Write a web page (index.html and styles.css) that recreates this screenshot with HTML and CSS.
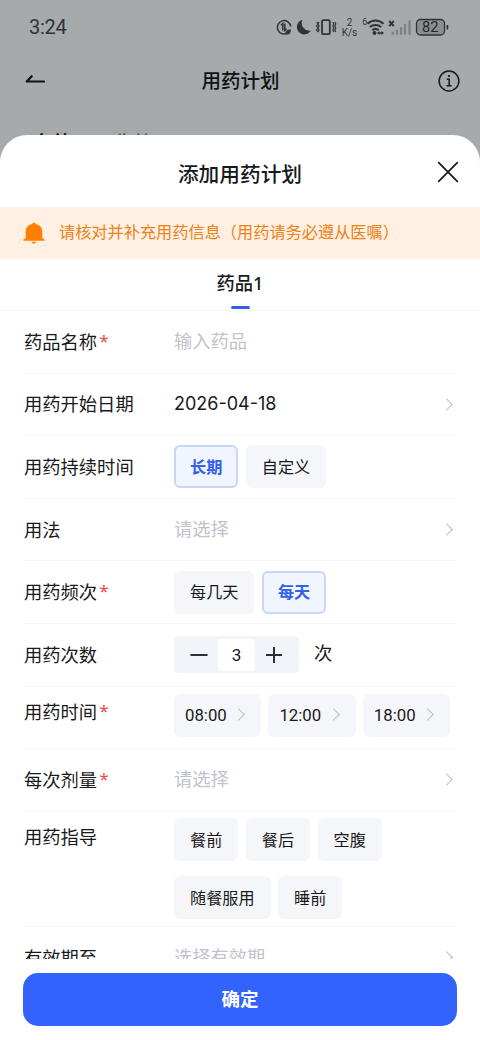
FILE: index.html
```html
<!DOCTYPE html>
<html lang="zh-CN">
<head>
<meta charset="utf-8">
<title>用药计划</title>
<link rel="stylesheet" href="styles.css">
</head>
<body>
<div class="screen">
  <div class="backdrop">
    <div class="status">
      <span class="clock">3:24</span>
      <svg class="status-icons" width="176" height="26" viewBox="0 0 176 26" fill="none" stroke="#303335">
        <path d="M12.300 19.200A6.700 6.700 0 1 1 15.700 12.500M6 11.200l1.800-1.700v7M9.800 9.500v7l1.800-1.700" stroke-width="1.500"/>
        <path d="M10.800 20.200c-1-3 1-4.700 5-5 .2 4-1.500 6-5 5z" fill="#303335" stroke="none"/>
        <path d="M27.500 5.800A7.400 7.400 0 1 0 35.800 16.500 7.600 7.600 0 0 1 27.500 5.800z" fill="#303335" stroke="none"/>
        <rect x="47" y="6.200" width="7.800" height="14" rx="1.300" stroke-width="1.800"/>
        <path d="M41.500 8l1.600 2-1.600 2 1.600 2-1.600 2 1.600 2M44 8l-1 2 1 2-1 2 1 2-1 2M57.800 8l1 2-1 2 1 2-1 2 1 2M59.800 8l1 2-1 2 1 2-1 2 1 2" stroke-width="1.200"/>
        <g fill="#303335" stroke="none">
          <text x="74.500" y="11.500" font-size="10" text-anchor="middle">2</text>
          <text x="74.500" y="22.300" font-size="10" text-anchor="middle">K/s</text>
          <text x="87.200" y="11" font-size="9">6</text>
        </g>
        <path d="M92.500 9.800c4.500-4.300 11.500-4.300 16 0M94.800 13.100c3.200-2.900 8.200-2.900 11.400 0M97.300 16.200c1.900-1.600 4.500-1.600 6.400 0" stroke-width="2"/>
        <circle cx="99.500" cy="19" r="2" fill="#303335" stroke="none"/>
        <path d="M102 19l2.500-2v1.300h2V17l2.500 2-2.500 2v-1.300h-2V21z" fill="#303335" stroke="none"/>
        <path d="M114.200 7l4.600 5.200M118.800 7l-4.600 5.200" stroke-width="1.900"/>
        <path d="M117.800 20.800V17.500M122 20.800V15.500M126 20.800V13M130 20.800V10M134.500 20.800V6.200" stroke="#7d8183" stroke-width="2.200"/>
        <rect x="141.500" y="5.500" width="28" height="15.500" rx="4" fill="#8a8e90" stroke-width="1.300"/>
        <path d="M172.400 11v4.500" stroke-width="1.700"/>
        <text class="battery-text" x="155.300" y="18.400" font-size="14.600" text-anchor="middle" fill="#242729" stroke="none">82</text>
      </svg>
    </div>
    <div class="navbar">
      <svg width="22" height="20" viewBox="0 0 22 20" fill="none" stroke="#101112" stroke-width="2.200" stroke-linecap="round" stroke-linejoin="round"><path d="M21 10.500H3.700L8.700 5.200"/></svg>
      <span class="nav-title">用药计划</span>
      <svg width="22" height="22" viewBox="0 0 22 22" fill="none" stroke="#17191a" stroke-width="1.500"><circle cx="11" cy="11" r="9.900"/><path d="M8.800 9.300h2.400v6.200M8.500 15.700h5"/><circle cx="11" cy="6" r="1.100" fill="#17191a" stroke="none"/></svg>
    </div>
    <div class="back-tabs"><span class="on">有效</span><span>失效</span></div>
  </div>

  <div class="sheet">
    <div class="sheet-head">
      <span class="sheet-title">添加用药计划</span>
      <svg class="close" width="24" height="24" viewBox="0 0 24 24" fill="none" stroke="#18191b" stroke-width="1.700" stroke-linecap="round"><path d="M2.700 2.700l18.600 18.600M21.300 2.700L2.700 21.300"/></svg>
    </div>
    <div class="notice">
      <svg width="22" height="22" viewBox="0 0 22 22" fill="#ff8000"><path d="M11 .5c1 0 1.600.6 1.700 1.500 4.100.9 6.600 3.900 6.600 7.500v6.500l2.300 1.600v1.200H.4v-1.200L2.700 16V9.500c0-3.600 2.500-6.600 6.600-7.500.1-.9.700-1.500 1.700-1.500zM8.500 19.700h5c-.4 1.100-1.200 1.800-2.500 1.800s-2.100-.7-2.500-1.800z"/></svg>
      <span>请核对并补充用药信息（用药请务必遵从医嘱）</span>
    </div>
    <div class="tabs"><div class="tab">药品1</div></div>

    <div class="form">
      <div class="row"><div class="label">药品名称<i>*</i></div><div class="field hint">输入药品</div></div>
      <div class="row"><div class="label">用药开始日期</div><div class="field date">2026-04-18</div><span class="arrow"></span></div>
      <div class="row"><div class="label">用药持续时间</div><div class="field chips"><span class="chip active">长期</span><span class="chip">自定义</span></div></div>
      <div class="row"><div class="label">用法</div><div class="field hint">请选择</div><span class="arrow"></span></div>
      <div class="row"><div class="label">用药频次<i>*</i></div><div class="field chips"><span class="chip">每几天</span><span class="chip active">每天</span></div></div>
      <div class="row"><div class="label">用药次数</div>
        <div class="field count">
          <div class="stepper">
            <svg width="18" height="18" viewBox="0 0 18 18" stroke="#2b2f36" stroke-width="2"><path d="M.5 9h17"/></svg>
            <span class="num">3</span>
            <svg width="18" height="18" viewBox="0 0 18 18" stroke="#2b2f36" stroke-width="2"><path d="M1 9h16M9 1v16"/></svg>
          </div>
          <span class="unit">次</span>
        </div>
      </div>
      <div class="row times"><div class="label">用药时间<i>*</i></div>
        <div class="field chips">
          <span class="chip time">08:00<b class="arrow"></b></span>
          <span class="chip time">12:00<b class="arrow"></b></span>
          <span class="chip time">18:00<b class="arrow"></b></span>
        </div>
      </div>
      <div class="row"><div class="label">每次剂量<i>*</i></div><div class="field hint">请选择</div><span class="arrow"></span></div>
      <div class="row guide"><div class="label">用药指导</div>
        <div class="field chips">
          <span class="chip">餐前</span><span class="chip">餐后</span><span class="chip">空腹</span>
          <span class="chip">随餐服用</span><span class="chip">睡前</span>
        </div>
      </div>
      <div class="row last"><div class="label">有效期至</div><div class="field hint">选择有效期</div><span class="arrow"></span></div>
    </div>
    <div class="footer"><button class="confirm">确定</button></div>
  </div>
</div>
</body>
</html>
```
FILE: styles.css
```css
* { box-sizing: border-box; }
body {
  margin: 0;
  font-family: "Noto Sans", "Noto Sans CJK SC", sans-serif;
  color: #18191b;
  background: #a6aaac;
}
.screen {
  width: 480px;
  height: 1040px;
  display: flex;
  flex-direction: column;
  overflow: hidden;
  background: #a6aaac;
}
.backdrop { height: 135px; flex: none; overflow: hidden; }
.status {
  height: 54px;
  padding: 0 29px;
  display: flex;
  align-items: center;
  justify-content: space-between;
}
.clock { font-family: Roboto, sans-serif; font-size: 20px; color: #303335; letter-spacing: -0.3px; }
.status-icons { font-family: Roboto, sans-serif; }
.navbar {
  height: 54px;
  padding: 0 20px 0 23px;
  display: flex;
  align-items: center;
  justify-content: space-between;
}
.nav-title { font-size: 19.5px; font-weight: 500; color: #101112; padding: 0 2px 3px 0; }
.back-tabs {
  display: flex;
  gap: 44px;
  padding: 22px 0 0 34px;
  font-size: 18.5px;
  line-height: 24px;
  color: #444749;
}
.back-tabs .on { color: #101112; font-weight: 700; }

.sheet {
  flex: 1;
  min-height: 0;
  display: flex;
  flex-direction: column;
  background: #fff;
  border-radius: 27px 27px 0 0;
  overflow: hidden;
}
.sheet-head {
  height: 72px;
  flex: none;
  display: flex;
  align-items: center;
  justify-content: center;
  padding-top: 3px;
  position: relative;
}
.sheet-title { font-size: 20.7px; font-weight: 500; }
.close { position: absolute; right: 20.5px; top: 25px; }
.notice {
  height: 52px;
  flex: none;
  display: flex;
  align-items: center;
  gap: 14px;
  padding-left: 23px;
  background: #fff0e3;
  color: #eb8218;
  font-size: 16.2px;
}
.notice span { padding-bottom: 4px; }
.tabs {
  height: 52px;
  flex: none;
  display: flex;
  justify-content: center;
  border-bottom: 1px solid #f3f4f6;
}
.tab {
  display: flex;
  flex-direction: column;
  align-items: center;
  font-size: 18.3px;
  font-weight: 500;
  line-height: 48px;
  height: 51px;
}
.tab::after {
  content: "";
  width: 19px;
  height: 3px;
  flex: none;
  border-radius: 2px;
  margin-top: -1px;
  background: #3161e8;
}

.form { flex: 1; min-height: 0; overflow: hidden; padding: 0 24px; }
.row {
  height: 62.6px;
  display: flex;
  align-items: center;
  border-bottom: 1px solid #f5f5f7;
  font-size: 18.3px;
  line-height: 26px;
}
.label { width: 150px; flex: none; }
.label i {
  font-style: normal;
  color: #ec4b4b;
  margin-left: 2px;
  font-size: 17px;
  line-height: 1;
  vertical-align: 2px;
}
.field { flex: 1; }
.hint { color: #c0c3cd; padding-bottom: 2px; }
.date { font-family: Inter, sans-serif; font-size: 18px; }
.arrow {
  width: 9px;
  height: 9px;
  flex: none;
  margin-right: 5px;
  border: solid #b9bbc1;
  border-width: 1.2px 1.2px 0 0;
  transform: rotate(45deg);
}
.chips { display: flex; flex-wrap: wrap; gap: 15px 7.5px; }
.chip {
  height: 43px;
  padding: 0 16px;
  display: flex;
  align-items: center;
  border-radius: 6px;
  background: #f5f6fa;
  font-size: 16.15px;
}
.chip.active {
  border: 2px solid #c7d6f9;
  padding: 0 14px;
  background: #f0f5ff;
  color: #3161e8;
  font-weight: 700;
}
.count { display: flex; align-items: center; gap: 15px; }
.stepper {
  width: 125px;
  height: 37px;
  border-radius: 4px;
  background: #f3f4f9;
  display: flex;
  align-items: center;
  justify-content: space-between;
  padding: 0 16px;
}
.num {
  width: 37px;
  height: 32px;
  border-radius: 4px;
  background: #fff;
  display: flex;
  align-items: center;
  justify-content: center;
  font-family: Roboto, sans-serif;
  font-size: 17px;
}
.unit { padding-bottom: 4px; }
.times { align-items: flex-start; padding-top: 7px; }
.times .label { padding-top: 5px; }
.times .chips { flex-wrap: nowrap; gap: 7px; }
.chip.time {
  width: 87.4px;
  padding: 0 15px 1px 11px;
  justify-content: space-between;
  font-family: Roboto, sans-serif;
  font-size: 16.8px;
}
.chip.time .arrow { margin-right: 3px; }
.guide { height: 115.5px; align-items: flex-start; padding-top: 6.5px; }
.guide .label { padding-top: 6px; }
.last { border: 0; padding-bottom: 2px; }

.footer { height: 81px; flex: none; padding: 14px 23px; }
.confirm {
  width: 434px;
  height: 53px;
  border: 0;
  border-radius: 15px;
  background: #3263ff;
  color: #fff;
  font-family: inherit;
  font-size: 18.5px;
  font-weight: 700;
  padding: 0 0 4px;
}
```
